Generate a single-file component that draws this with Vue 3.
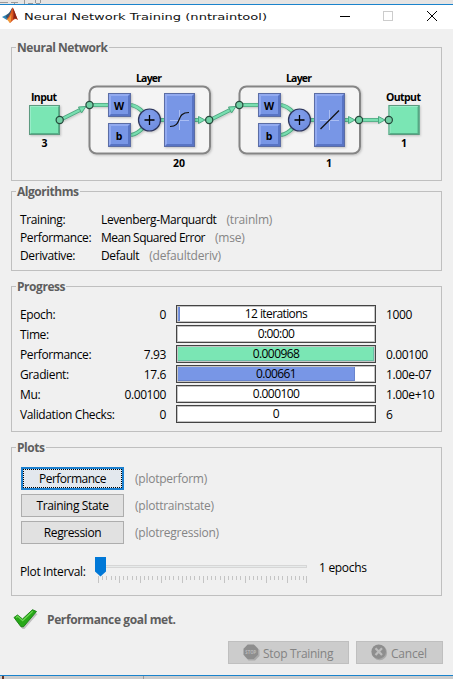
<script setup>
const algorithms = [
  { k: 'Training:', v: 'Levenberg-Marquardt', f: '(trainlm)' },
  { k: 'Performance:', v: 'Mean Squared Error', f: '(mse)', tight: true },
  { k: 'Derivative:', v: 'Default', f: '(defaultderiv)' },
]
const progress = [
  { k: 'Epoch:', from: '0', now: '12 iterations', to: '1000', w: 2, c: 'blue' },
  { k: 'Time:', from: '', now: '0:00:00', to: '', w: 0, c: 'blue' },
  { k: 'Performance:', from: '7.93', now: '0.000968', to: '0.00100', w: 196, c: 'green' },
  { k: 'Gradient:', from: '17.6', now: '0.00661', to: '1.00e-07', w: 177, c: 'blue' },
  { k: 'Mu:', from: '0.00100', now: '0.000100', to: '1.00e+10', w: 0, c: 'blue' },
  { k: 'Validation Checks:', from: '0', now: '0', to: '6', w: 0, c: 'blue' },
]
const plots = [
  { t: 'Performance', f: '(plotperform)', focus: true },
  { t: 'Training State', f: '(plottrainstate)' },
  { t: 'Regression', f: '(plotregression)' },
]
const layers = [
  { x: 0, n: '20', curve: 'M170 126.500C183 126.500 175 112.500 189 112.500' },
  { x: 150, n: '1', curve: 'M170.500 129L189 110.500' },
]
const ticks = Array.from({ length: 51 }, (_, i) => ({
  x: Math.min(Math.round(i * 4.19), 208) + 0.5,
  h: i % 5 === 0 ? 7 : 4,
}))
</script>

<template>
  <div class="window">
    <div class="behind-top">
      <svg width="50" height="4" viewBox="0 0 50 4" shape-rendering="crispEdges">
        <path d="M0 2.500H8M11 2.500H18M14.500 2V4M24.500 0V4M28 3.500H33M35.500 0V3M36 3.500H40M40.500 0V3" stroke="#999" />
      </svg>
    </div>
    <header class="titlebar">
      <svg class="logo" width="17" height="17" viewBox="0 0 17 17">
        <path d="M0 10L5 7.500L8 9.500L5 13Z" fill="#2f86b8" />
        <path d="M5 7.500C8 6 9 2 10.500 0.500L9 8L6 11.500L3.500 10Z" fill="#35546f" />
        <path d="M10.500 0.500C8.500 5 8 9 4.500 12.500C6.500 12 7 15 8 16C11 14 12 10 16 13C14 9 12 2 10.500 0.500Z" fill="#d9541e" />
        <path d="M5 12.500C8 11 8.500 8 9.500 6L9 14L8 16Z" fill="#f19a3c" />
        <path d="M10.500 0.500C12.500 3 14 9 16 13C13.500 10.500 12 11.500 11 12.500C12 8 11.500 4 10.500 0.500Z" fill="#8b2318" />
      </svg>
      <svg class="caption" width="246" height="20" viewBox="0 0 246 20">
        <text x="0" y="13" textLength="243" lengthAdjust="spacingAndGlyphs">Neural Network Training (nntraintool)</text>
      </svg>
      <svg class="controls" width="100" height="12" viewBox="0 0 100 12" shape-rendering="crispEdges">
        <path d="M0 6.500H10" stroke="#000" />
        <rect x="43.500" y="1.500" width="9" height="9" fill="none" stroke="#ccc" />
        <path d="M87 1L97 11M97 1L87 11" stroke="#000" shape-rendering="auto" />
      </svg>
    </header>

    <main class="body">
      <section class="panel network">
        <h2>Neural Network</h2>
        <svg width="429" height="132" viewBox="12 48 429 132">
          <defs>
            <filter id="shade" x="-20%" y="-20%" width="150%" height="150%">
              <feDropShadow dx="1" dy="1" stdDeviation="0.8" flood-color="#000" flood-opacity="0.2" />
            </filter>
            <radialGradient id="ball" cx="0.4" cy="0.35" r="0.7">
              <stop offset="0" stop-color="#86a3ee" /><stop offset="1" stop-color="#6c8add" />
            </radialGradient>
          </defs>

          <g v-for="l in layers" :key="'f' + l.x" :transform="`translate(${l.x} 0)`">
            <rect x="89.500" y="86.500" width="120.500" height="67" rx="7" fill="#f4f4f4" stroke="#858585" stroke-width="2" filter="url(#shade)" />
            <text x="149" y="81.500" text-anchor="middle" textLength="26">Layer</text>
            <text x="179" y="166.500" text-anchor="middle">{{ l.n }}</text>
          </g>

          <g class="wires" filter="url(#shade)">
            <path d="M60 120L82 109M210 120L232 109M360 120H380" />
            <path d="M90 105H110M131 105C137 106 140 109 143 112M131 135C137 134 140 131 143 128M160 120H165M194 120H200" />
            <path d="M240 105H260M281 105C287 106 290 109 293 112M281 135C287 134 290 131 293 128M310 120H315M344 120H350" />
          </g>
          <g class="wires-light">
            <path d="M60 120L80 110M210 120L230 110M360 120H378" />
            <path d="M90 105H110M131 105C137 106 140 109 143 112M131 135C137 134 140 131 143 128M160 120H165M194 120H199" />
            <path d="M240 105H260M281 105C287 106 290 109 293 112M281 135C287 134 290 131 293 128M310 120H315M344 120H349" />
          </g>
          <g class="heads">
            <path d="M78.500 107L86 106.500L81.500 113ZM228.500 107L236 106.500L231.500 113ZM378.500 116.500L385 120L378.500 123.500ZM198.500 116.500L205 120L198.500 123.500ZM348.500 116.500L355 120L348.500 123.500Z" />
          </g>

          <g v-for="e in [{ x: 29, t: 'Input', n: '3', w: 26 }, { x: 388.500, t: 'Output', n: '1', w: 35 }]" :key="e.t">
            <g :transform="`translate(${e.x} 105)`">
              <rect width="31" height="30" fill="#7ae6b4" filter="url(#shade)" />
              <path d="M0 0H31L29 2H2V28L0 30Z" fill="#98ecc8" />
              <path d="M31 0V30H0L2 28H29V2Z" fill="#54b188" />
              <rect x="0.500" y="0.500" width="30" height="29" fill="none" stroke="#5d9a80" />
            </g>
            <text :x="e.x + 15" y="101" text-anchor="middle" :textLength="e.w">{{ e.t }}</text>
            <text :x="e.x + 15.500" y="146.500" text-anchor="middle">{{ e.n }}</text>
          </g>

          <g v-for="l in layers" :key="'n' + l.x" :transform="`translate(${l.x} 0)`">
            <g v-for="b in [{ y: 93, t: 'W' }, { y: 123, t: 'b' }]" :key="b.t">
              <rect x="108" :y="b.y" width="23" height="24" fill="#7896e6" filter="url(#shade)" />
              <g :transform="`translate(108 ${b.y})`">
                <path d="M0 0H23L20 3H3V21L0 24Z" fill="#92aaf0" />
                <path d="M23 0V24H0L3 21H20V3Z" fill="#5874c4" />
                <rect x="0.500" y="0.500" width="22" height="23" fill="none" stroke="#5b6da5" />
                <text x="11.200" y="16.500" text-anchor="middle">{{ b.t }}</text>
              </g>
            </g>
            <g transform="translate(164 93)">
              <rect width="31" height="54" fill="#7896e6" filter="url(#shade)" />
              <path d="M0 0H31L28 3H3V51L0 54Z" fill="#92aaf0" />
              <path d="M31 0V54H0L3 51H28V3Z" fill="#5874c4" />
              <rect x="0.500" y="0.500" width="30" height="53" fill="none" stroke="#5b6da5" />
              <path d="M15.500 17V37M6 27.500H25" stroke="#a9bdf4" />
            </g>
            <path :d="l.curve" fill="none" stroke="#111" stroke-width="1.200" />
            <circle cx="149.500" cy="120" r="11" fill="url(#ball)" stroke="#2d355a" stroke-width="1.200" filter="url(#shade)" />
            <path d="M144.500 120H154.500M149.500 115V125" stroke="#000" stroke-width="1.300" />
          </g>
          <g class="ports">
            <circle cx="59.700" cy="120" r="3.600" /><circle cx="89.500" cy="105" r="3.600" />
            <circle cx="209.200" cy="120" r="3.600" /><circle cx="239.300" cy="105" r="3.600" />
            <circle cx="359" cy="120" r="3.600" /><circle cx="388.800" cy="120" r="3.600" />
          </g>
        </svg>
      </section>

      <section class="panel algorithms">
        <h2>Algorithms</h2>
        <div v-for="a in algorithms" :key="a.k" class="algo">
          <span class="key">{{ a.k }}</span><span class="val" :class="{ tight: a.tight }">{{ a.v }}</span><span class="fn">{{ a.f }}</span>
        </div>
      </section>

      <section class="panel progress">
        <h2>Progress</h2>
        <div v-for="p in progress" :key="p.k" class="prow">
          <span class="key">{{ p.k }}</span>
          <span class="from">{{ p.from }}</span>
          <div class="bar">
            <i :class="p.c" :style="{ width: p.w + 'px' }"></i>
            <b>{{ p.now }}</b>
          </div>
          <span class="to">{{ p.to }}</span>
        </div>
      </section>

      <section class="panel plots">
        <h2>Plots</h2>
        <div v-for="p in plots" :key="p.t" class="plot">
          <button :class="{ focus: p.focus }"><span>{{ p.t }}</span></button>
          <span class="fn">{{ p.f }}</span>
        </div>
        <div class="interval">
          <span class="ilabel">Plot Interval:</span>
          <svg width="214" height="28" viewBox="-3 0 214 28">
            <rect x="5.500" y="8.500" width="203" height="2" fill="#e7eaea" stroke="#d6d6d6" />
            <path d="M-3 0H8V14.500L2.500 19.500L-3 14.500Z" fill="#0078d7" />
            <path v-for="t in ticks" :key="t.x" :d="`M${t.x} 19V${19 + t.h}`" stroke="#c4c4c4" />
          </svg>
          <span class="epochs">1 epochs</span>
        </div>
      </section>

      <div class="status">
        <svg width="26" height="22" viewBox="0 0 26 22">
          <path d="M1.500 9.500L6 7L10 11L19.500 1.500L23.500 3.500L10.500 18.500H8.500Z" fill="#777" opacity="0.4" transform="translate(1 1.500)" />
          <path d="M1 8.500L4.500 6L9.500 10L19.500 0.700L23.500 2.500L10.500 17.800H8Z" fill="#27a818" stroke="#168010" stroke-width="0.900" stroke-linejoin="round" />
          <path d="M3 8.500L4.700 7.300L9.700 11.700L19.700 2.200" fill="none" stroke="#6ed654" stroke-width="1.200" />
        </svg>
        <strong>Performance goal met.</strong>
      </div>

      <div class="actions">
        <button class="stop" disabled>
          <svg width="17" height="17" viewBox="0 0 17 17">
            <path d="M5 1.500H12L16.500 6V12L12 16.500H5.500L1.500 12Z" fill="#aaa" />
            <path d="M4.700 0.500H10.800L15 4.700V10.800L10.800 15H4.700L0.500 10.800V4.700Z" fill="#8e8e8e" />
            <text x="7.800" y="9.600" text-anchor="middle" textLength="11" lengthAdjust="spacingAndGlyphs">STOP</text>
          </svg>
          <span>Stop Training</span>
        </button>
        <button class="cancel" disabled>
          <svg width="17" height="17" viewBox="0 0 17 17">
            <circle cx="8.600" cy="8.800" r="7.500" fill="#aaa" />
            <circle cx="7.700" cy="7.700" r="7.300" fill="#8e8e8e" />
            <path d="M4.500 4.300L11 11M11 4.300L4.500 11" stroke="#bdbdbd" stroke-width="2.200" />
          </svg>
          <span>Cancel</span>
        </button>
      </div>
    </main>
    <footer class="behind-bottom"><i></i><b></b></footer>
  </div>
</template>

<style>
body { margin: 0; overflow: hidden; }
</style>

<style scoped>
* { box-sizing: border-box; }
.window { width: 453px; height: 679px; display: flex; flex-direction: column; background: #f0f0f0; font: 12px/18px "Open Sans", "Noto Sans", sans-serif; color: #000; letter-spacing: -0.2px; overflow: hidden; white-space: nowrap; }
.behind-top { height: 4px; flex: none; background: #e6e4e3; }
.behind-top svg { display: block; }
.titlebar { height: 25px; flex: none; background: #fff; border-top: 1px solid #1a83cc; display: flex; align-items: flex-start; padding: 2px 0 0 2px; }
.logo { margin: 0 5px 0 0; }
.caption { flex: none; }
.caption text { font: 9.2px "DejaVu Sans", sans-serif; letter-spacing: 0; fill: #111; }
.controls { margin: 3px 0 0 70px; flex: none; }
.body { flex: 1; min-height: 0; padding: 18px 10px 0 11px; }
.panel { position: relative; width: 431px; border: 1px solid #bfbfbf; margin: 0 0 10px; }
h2 { position: absolute; left: 4px; top: -9px; margin: 0; padding: 0 1px; background: #f0f0f0; font-size: 12px; line-height: 18px; font-weight: 700; color: #5e5e5e; letter-spacing: -0.45px; }
.network { height: 134px; }
.network svg { display: block; }
.network text { font: 700 10.5px "Open Sans", sans-serif; letter-spacing: 0; fill: #000; }
.wires path { fill: none; stroke: #4fa581; stroke-width: 4; }
.wires-light path { fill: none; stroke: #78dfb0; stroke-width: 2.4; }
.heads path { fill: #78e3b2; stroke: #4fa581; stroke-width: 1; }
.ports circle { fill: #71cfa4; stroke: #24483a; stroke-width: 1.2; }
.algorithms { height: 80px; padding: 19px 0 0 8px; margin-top: 10px; }
.algo { display: flex; height: 18px; }
.key, .val { letter-spacing: -0.38px; }
.tight { letter-spacing: -0.52px; }
.algo .key { width: 81px; }
.fn { color: #858585; }
.algo .fn { margin-left: 10px; }
.progress { height: 146px; padding: 18px 0 0 8px; margin-top: 15px; }
.prow { display: flex; height: 20px; }
.prow > span { padding-top: 1px; }
.prow .key { width: 100px; }
.prow .from { width: 46px; text-align: right; letter-spacing: -0.4px; }
.prow .to { letter-spacing: -0.35px; }
.bar { position: relative; width: 200px; height: 18px; margin: 0 10px; border: 1px solid #444; background: #fff; box-shadow: inset 0 0 0 1px #c4c4c4; display: flex; padding: 1px; }
.bar i { height: 14px; box-shadow: inset -1px -1px rgba(60, 80, 130, 0.25); }
.bar .blue { background: #7896e6; }
.bar .green { background: #7ae6b4; }
.bar b { position: absolute; inset: 0; line-height: 16px; text-align: center; font-weight: 400; letter-spacing: -0.6px; }
.plots { height: 149px; padding: 19px 0 0 9px; margin-top: 15px; }
.plot { display: flex; height: 27px; }
.plot .fn { margin-left: 11px; line-height: 24px; letter-spacing: -0.25px; }
button { height: 23px; padding: 0; font: inherit; letter-spacing: inherit; color: #000; background: #e1e1e1; border: 1px solid #adadad; }
.plot button { width: 103px; letter-spacing: -0.4px; }
.plot button + .fn { white-space: nowrap; }
.plot button span { display: block; height: 21px; line-height: 22px; }
.plot button.focus { border: 2px solid #1c80cf; background: #e3e8ee; }
.plot button.focus span { height: 19px; line-height: 18px; border: 1px dotted #000; letter-spacing: -0.5px; }
.plot:nth-of-type(2) button { letter-spacing: -0.35px; }
.interval { display: flex; height: 28px; padding-top: 9px; margin-left: -1px; }
.interval > * { flex: none; }
.ilabel { width: 75px; padding-top: 6px; letter-spacing: -0.35px; }
.epochs { margin-left: 10px; padding-top: 2px; letter-spacing: -0.3px; }
.status { display: flex; height: 24px; margin-top: 13px; padding-left: 2px; }
.status strong { margin: 2px 0 0 8px; color: #5e5e5e; letter-spacing: -0.38px; }
.actions { display: flex; justify-content: flex-end; gap: 7px; margin-top: 8px; }
.actions button { display: flex; align-items: flex-start; background: #ccc; border-color: #bfbfbf; color: #838383; padding: 2px 0 0 14px; }
.actions svg text { font: 700 4.5px "Open Sans", sans-serif; fill: #bababa; letter-spacing: 0; }
.actions span { margin-left: 3px; line-height: 19px; }
.stop { width: 121px; letter-spacing: -0.3px; }
.cancel { width: 87px; }
.behind-bottom { height: 4px; flex: none; border-top: 1px solid #1a83cc; background: #ccc; display: flex; padding-left: 2px; }
.behind-bottom i { width: 2px; background: #632; }
.behind-bottom b { width: 1px; margin-left: 139px; background: #999; }
</style>
